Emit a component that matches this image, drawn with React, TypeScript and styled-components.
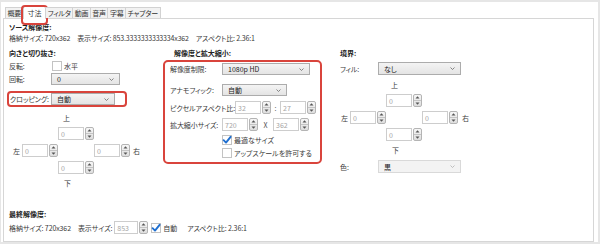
import React from "react";
import styled, { createGlobalStyle } from "styled-components";

const RED = "#d9443c";

const Global = createGlobalStyle`
  *, *::before, *::after { box-sizing: border-box; }
  html, body { margin: 0; padding: 0; background: #fff; }
  body { font-family: "Noto Sans CJK JP", "Noto Sans", sans-serif; }
  #root { width: 600px; height: 244px; }
`;

const Frame = styled.div`
  width: 600px;
  height: 244px;
  border: 2px solid #e6e6e6;
  border-left-width: 1px;
  padding: 4px 4px 0 2px;
  display: flex;
  flex-direction: column;
  font-size: 7px;
  font-feature-settings: "palt";
  color: #3a3a3a;
  background: #fff;
`;

const TabStrip = styled.div`
  display: flex;
  align-items: flex-end;
  height: 12px;
  padding-left: 3px;
  position: relative;
  z-index: 1;
`;

const Tab = styled.div<{ $active?: boolean }>`
  position: relative;
  height: ${(p) => (p.$active ? "13px" : "11px")};
  margin-bottom: ${(p) => (p.$active ? "-1px" : "0")};
  margin-left: -1px;
  padding: 0 ${(p) => (p.$active ? "4px" : "1.5px")};
  border: 1px solid #d2d2d2;
  border-bottom: none;
  background: ${(p) => (p.$active ? "#fff" : "#f2f2f2")};
  display: flex;
  align-items: center;
  line-height: 9px;
  color: #333;
  white-space: nowrap;
  letter-spacing: -0.2px;
  &::after {
    content: "";
    display: ${(p) => (p.$active ? "block" : "none")};
    position: absolute;
    left: -3px;
    right: -3px;
    top: -2px;
    bottom: -6px;
    border: 2px solid ${RED};
    border-radius: 4px;
  }
`;

const Panel = styled.div`
  flex: 1;
  border: 1px solid #d6d6d6;
  padding: 3px 6px 7px 5px;
  display: flex;
  flex-direction: column;
  background: #fff;
`;

const Heading = styled.div<{ $pl?: number }>`
  font-weight: 700;
  line-height: 10px;
  height: 10px;
  color: #222;
  padding-left: ${(p) => p.$pl ?? 0}px;
  white-space: nowrap;
`;

const InfoRow = styled.div`
  display: flex;
  align-items: center;
  gap: 7px;
  margin-top: 1px;
  line-height: 10px;
  white-space: nowrap;
  letter-spacing: -0.15px;
`;

const Slot = styled.div<{ $w?: number }>`
  flex: 0 0 ${(p) => (p.$w ? `${p.$w}px` : "auto")};
  white-space: nowrap;
  line-height: 10px;
`;

const Columns = styled.div`
  display: grid;
  grid-template-columns: 154px 177px 1fr;
  margin-top: 5px;
  align-items: start;
`;

const Col = styled.div`
  display: flex;
  flex-direction: column;
`;

const FieldRow = styled.div<{ $mt?: number; $h?: number }>`
  display: flex;
  align-items: center;
  margin-top: ${(p) => p.$mt ?? 0}px;
  height: ${(p) => p.$h ?? 12}px;
`;

const Label = styled.div<{ $w: number }>`
  flex: 0 0 ${(p) => p.$w}px;
  white-space: nowrap;
  line-height: 10px;
  letter-spacing: -0.1px;
`;

const SelectBox = styled.div<{ $w: number; $h?: number; $disabled?: boolean }>`
  width: ${(p) => p.$w}px;
  height: ${(p) => p.$h ?? 12}px;
  border: 1px solid ${(p) => (p.$disabled ? "#d9d9d9" : "#acacac")};
  background: ${(p) =>
    p.$disabled ? "#f3f3f3" : "linear-gradient(#f4f4f4, #e4e4e4)"};
  display: flex;
  align-items: center;
  justify-content: space-between;
  padding: 0 5px 0 5px;
  color: #222;
  line-height: 10px;
  white-space: nowrap;
`;

const Chevron = ({ light }: { light?: boolean }) => (
  <svg width="5" height="3" viewBox="0 0 5 3">
    <path
      d="M0.5 0.5 L2.5 2.5 L4.5 0.5"
      fill="none"
      stroke={light ? "#b0b0b0" : "#6a6a6a"}
      strokeWidth="0.8"
    />
  </svg>
);

const Select = ({
  w,
  h,
  value,
  disabled,
}: {
  w: number;
  h?: number;
  value: string;
  disabled?: boolean;
}) => (
  <SelectBox $w={w} $h={h} $disabled={disabled}>
    <span>{value}</span>
    <Chevron light={disabled} />
  </SelectBox>
);

const SpinWrap = styled.div`
  display: flex;
  align-items: stretch;
  gap: 1px;
  height: 13px;
`;

const SpinInput = styled.div<{ $w: number }>`
  width: ${(p) => p.$w}px;
  border: 1px solid #cdcdcd;
  background: #fff;
  color: #a5a5a5;
  padding-left: 2px;
  display: flex;
  align-items: center;
  line-height: 10px;
`;

const SpinBtns = styled.div`
  width: 9px;
  border: 1px solid #b4b4b4;
  border-radius: 2px;
  background: linear-gradient(#f7f7f7, #dedede);
  display: flex;
  flex-direction: column;
`;

const SpinHalf = styled.div<{ $bottom?: boolean }>`
  flex: 1;
  display: flex;
  align-items: center;
  justify-content: center;
  border-top: ${(p) => (p.$bottom ? "1px solid #c4c4c4" : "none")};
`;

const Tri = ({ down }: { down?: boolean }) => (
  <svg width="5" height="3" viewBox="0 0 5 3">
    <path d={down ? "M0.5 0.5 L4.5 0.5 L2.5 2.7 Z" : "M0.5 2.5 L4.5 2.5 L2.5 0.3 Z"} fill="#555" />
  </svg>
);

const Spinner = ({ value, w = 26 }: { value: string; w?: number }) => (
  <SpinWrap>
    <SpinInput $w={w}>{value}</SpinInput>
    <SpinBtns>
      <SpinHalf>
        <Tri />
      </SpinHalf>
      <SpinHalf $bottom>
        <Tri down />
      </SpinHalf>
    </SpinBtns>
  </SpinWrap>
);

const CheckBoxEl = styled.div`
  width: 10px;
  height: 10px;
  border: 1px solid #c3c3c3;
  background: #fff;
  display: flex;
  align-items: center;
  justify-content: center;
  flex: 0 0 10px;
  overflow: visible;
`;

const CheckBox = ({ checked }: { checked?: boolean }) => (
  <CheckBoxEl>
    {checked && (
      <svg width="10" height="10" viewBox="0 0 10 10" style={{ overflow: "visible" }}>
        <path
          d="M1.6 5.2 L4 7.6 L8.6 1.8"
          fill="none"
          stroke="#1f6fd0"
          strokeWidth="1.9"
          strokeLinecap="round"
          strokeLinejoin="round"
        />
      </svg>
    )}
  </CheckBoxEl>
);

const CheckText = styled.span<{ $ml?: number }>`
  margin-left: ${(p) => p.$ml ?? 2}px;
  line-height: 10px;
  white-space: nowrap;
`;

const CropBox = styled.div`
  display: flex;
  align-items: center;
  margin-top: 6px;
  margin-left: -2px;
  width: 120px;
  height: 16px;
  border: 2px solid ${RED};
  border-radius: 4px;
  padding-left: 1px;
`;

const Cross = styled.div<{ $first: number }>`
  display: grid;
  grid-template-columns: ${(p) => p.$first}px 36px 36px 36px auto;
  row-gap: 4px;
  align-items: center;
`;

const Cell = styled.div<{ $col: number; $row: number; $align?: "start" | "end"; $pl?: number; $pr?: number }>`
  grid-column: ${(p) => p.$col};
  grid-row: ${(p) => p.$row};
  justify-self: ${(p) => p.$align ?? "start"};
  padding-left: ${(p) => p.$pl ?? 0}px;
  padding-right: ${(p) => p.$pr ?? 0}px;
  line-height: 10px;
  white-space: nowrap;
`;

const CrossWrap = styled.div<{ $mt: number }>`
  margin-top: ${(p) => p.$mt}px;
`;

const Margins = ({ first, mt, rightPl }: { first: number; mt: number; rightPl: number }) => (
  <CrossWrap $mt={mt}>
    <Cross $first={first}>
      <Cell $col={3} $row={1} $pl={5}>上</Cell>
      <Cell $col={3} $row={2}><Spinner value="0" /></Cell>
      <Cell $col={1} $row={3} $align="end" $pr={2}>左</Cell>
      <Cell $col={2} $row={3}><Spinner value="0" /></Cell>
      <Cell $col={4} $row={3}><Spinner value="0" /></Cell>
      <Cell $col={5} $row={3} $pl={rightPl}>右</Cell>
      <Cell $col={3} $row={4}><Spinner value="0" /></Cell>
      <Cell $col={3} $row={5} $pl={6}>下</Cell>
    </Cross>
  </CrossWrap>
);

const MidBox = styled.div`
  margin-top: 2px;
  width: 159px;
  border: 2px solid ${RED};
  border-radius: 5px;
  padding: 1px 4px 4px 5px;
  display: flex;
  flex-direction: column;
`;

const Sep = styled.div`
  width: 15px;
  text-align: center;
  line-height: 10px;
  color: #555;
`;

const Bottom = styled.div`
  margin-top: auto;
  display: flex;
  flex-direction: column;
`;

const BottomRow = styled.div`
  display: flex;
  align-items: center;
  height: 13px;
  margin-top: 2px;
  white-space: nowrap;
  letter-spacing: -0.1px;
`;

const Gap = styled.div<{ $w: number }>`
  flex: 0 0 ${(p) => p.$w}px;
`;

export default function App() {
  return (
    <>
      <Global />
      <Frame>
        <TabStrip>
          <Tab>概要</Tab>
          <Tab $active>寸法</Tab>
          <Tab>フィルタ</Tab>
          <Tab>動画</Tab>
          <Tab>音声</Tab>
          <Tab>字幕</Tab>
          <Tab>チャプター</Tab>
        </TabStrip>
        <Panel>
          <Heading>ソース解像度:</Heading>
          <InfoRow>
            <Slot>格納サイズ: 720x362</Slot>
            <Slot>表示サイズ: 853.3333333333334x362</Slot>
            <Slot>アスペクト比: 2.36:1</Slot>
          </InfoRow>
          <Columns>
            <Col>
              <Heading>向きと切り抜き:</Heading>
              <FieldRow $mt={2}>
                <Label $w={43}>反転:</Label>
                <CheckBox />
                <CheckText>水平</CheckText>
              </FieldRow>
              <FieldRow $mt={1}>
                <Label $w={42}>回転:</Label>
                <Select w={69} value="0" />
              </FieldRow>
              <CropBox>
                <Label $w={41}>クロッピング:</Label>
                <Select w={64} value="自動" />
              </CropBox>
              <Margins first={13} mt={6} rightPl={3} />
            </Col>
            <Col>
              <Heading $pl={11}>解像度と拡大縮小:</Heading>
              <MidBox>
                <FieldRow $mt={0}>
                  <Label $w={52}>解像度制限:</Label>
                  <Select w={88} value="1080p HD" />
                </FieldRow>
                <FieldRow $mt={9}>
                  <Label $w={52}>アナモフィック:</Label>
                  <Select w={65} value="自動" />
                </FieldRow>
                <FieldRow $mt={5} $h={13}>
                  <Label $w={52}>ピクセルアスペクト比:</Label>
                  <Spinner value="32" />
                  <Sep>:</Sep>
                  <Spinner value="27" />
                </FieldRow>
                <FieldRow $mt={4} $h={13}>
                  <Label $w={52}>拡大縮小サイズ:</Label>
                  <Spinner value="720" />
                  <Sep>X</Sep>
                  <Spinner value="362" />
                </FieldRow>
                <FieldRow $mt={4} $h={10}>
                  <Label $w={52} />
                  <CheckBox checked />
                  <CheckText>最適なサイズ</CheckText>
                </FieldRow>
                <FieldRow $mt={3} $h={10}>
                  <Label $w={52} />
                  <CheckBox />
                  <CheckText>アップスケールを許可する</CheckText>
                </FieldRow>
              </MidBox>
            </Col>
            <Col>
              <Heading>境界:</Heading>
              <FieldRow $mt={4} $h={13}>
                <Label $w={38}>フィル:</Label>
                <Select w={83} h={13} value="なし" />
              </FieldRow>
              <Margins first={10} mt={5} rightPl={4} />
              <FieldRow $mt={5} $h={13}>
                <Label $w={38}>色:</Label>
                <Select w={83} h={13} value="黒" disabled />
              </FieldRow>
            </Col>
          </Columns>
          <Bottom>
            <Heading>最終解像度:</Heading>
            <BottomRow>
              <Slot>格納サイズ: 720x362</Slot>
              <Gap $w={7} />
              <Slot>表示サイズ:</Slot>
              <Gap $w={2} />
              <Spinner value="853" w={24} />
              <Gap $w={3} />
              <CheckBox checked />
              <CheckText>自動</CheckText>
              <Gap $w={10} />
              <Slot>アスペクト比: 2.36:1</Slot>
            </BottomRow>
          </Bottom>
        </Panel>
      </Frame>
    </>
  );
}
